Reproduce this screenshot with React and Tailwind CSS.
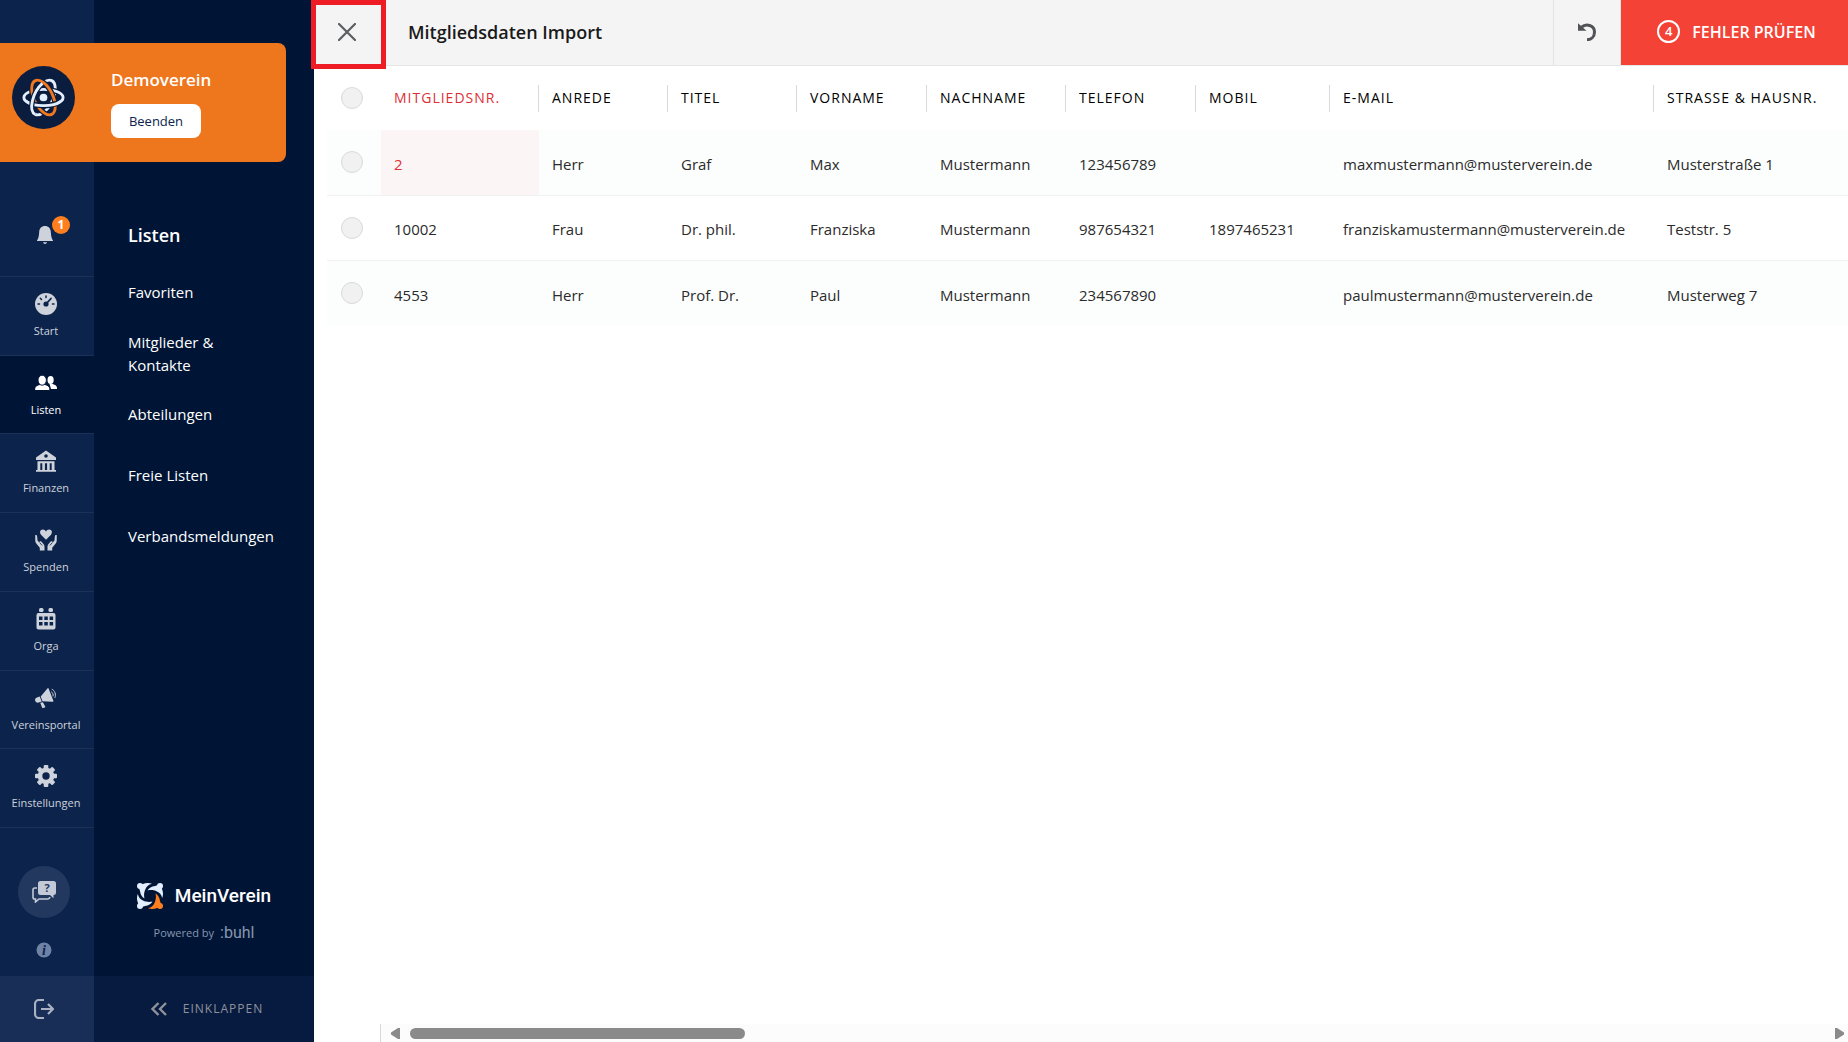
import { useState } from 'react';

const GaugeIcon = () => (
  <svg viewBox="0 0 22 22" className="h-[22px] w-[22px]" fill="currentColor">
    <circle cx="11" cy="11" r="11" />
    <g stroke="#0c244c" fill="none" strokeWidth="1.5" strokeLinecap="round">
      <path d="M3 11h1.5M17.5 11H19M11 3v1.5M5.3 5.3l1.2 1.2" />
      <path d="M11 11l5-5.5" strokeWidth="1.8" />
    </g>
    <circle cx="11" cy="11" r="2.6" fill="#0c244c" />
  </svg>
);

const PeopleIcon = () => (
  <svg viewBox="0 0 22 22" className="h-[22px] w-[22px]" fill="currentColor">
    <ellipse cx="15.6" cy="8" rx="3.1" ry="4" />
    <path d="M14.5 11.8h2.4c3 .8 5.1 2 5.1 4.2v1h-6z" />
    <g stroke="#001535" strokeWidth="1">
      <path d="M-.3 18.5v-1.7c0-2.5 2.8-3.8 5.5-4.4h4.2c2.7.6 5.4 1.9 5.4 4.4v1.7z" />
      <ellipse cx="7.2" cy="8.2" rx="4.2" ry="5" />
    </g>
  </svg>
);

const BankIcon = () => (
  <svg viewBox="0 0 22 22" className="h-[22px] w-[22px]" fill="currentColor">
    <path fillRule="evenodd" d="M11 .5L21 7.5V10H1V7.5zM11 4.200a1.8 1.8 0 1 0 0 3.600 1.8 1.8 0 0 0 0-3.600z" />
    <path d="M2.5 11.200h17v2h-17zM2.5 12h2.800v8.500H2.500zM7.300 12h2.600v8.500H7.300zM12.100 12h2.600v8.500h-2.600zM16.700 12h2.800v8.500h-2.800zM1 20h20v1.700H1z" />
  </svg>
);

const DonateIcon = () => (
  <svg viewBox="0 0 22 22" className="h-[22px] w-[22px]" fill="currentColor">
    <path d="M11 10.800L6 5.700C4.300 3.800 5.100.6 7.800.6c1.600 0 2.500.8 3.200 2 .7-1.200 1.600-2 3.200-2 2.700 0 3.500 3.200 1.800 5.100z" />
    <path d="M.2 6.200c.9-.5 1.800 0 1.900 1l.5 4.500 1.700 1.500c.2-1 1.400-1.300 2.200-.5l2.200 2.600c.6.8.8 1.600.8 2.500V21.500H4.800v-2.700L1.300 14.600C.6 13.800.3 13 .3 12z" />
    <path d="M21.800 6.200c-.9-.5-1.800 0-1.900 1l-.5 4.500-1.700 1.500c-.2-1-1.400-1.300-2.200-.5l-2.200 2.600c-.6.8-.8 1.600-.8 2.500V21.500h4.700v-2.700l3.500-4.200c.7-.8 1-1.600 1-2.600z" />
    <path d="M4.600 13.500l2.600 3M17.400 13.500l-2.600 3" stroke="#0c244c" strokeWidth=".8" />
  </svg>
);

const CalendarIcon = () => (
  <svg viewBox="0 0 22 22" className="h-[22px] w-[22px]" fill="currentColor">
    <rect x="4" y="0" width="4.5" height="4" rx="1.5" />
    <rect x="13.5" y="0" width="4.5" height="4" rx="1.5" />
    <path
      fillRule="evenodd"
      d="M3.500 5h15a2 2 0 0 1 2 2v12.500a2 2 0 0 1-2 2h-15a2 2 0 0 1-2-2V7a2 2 0 0 1 2-2zM4 8.500v3.500h3.500V8.500zM9.300 8.500v3.500h3.500V8.500zM14.600 8.500v3.500h3.500V8.500zM4 14v3.500h3.500V14zM9.300 14v3.500h3.500V14zM14.600 14v3.500h3.500V14z"
    />
  </svg>
);

const MegaphoneIcon = () => (
  <svg viewBox="0 0 22 22" className="h-[22px] w-[22px]" fill="currentColor">
    <path d="M12.200 1.800c.5-1 1.200-1 1.500-.1l4.600 11.800c.3.900-.2 1.400-1.100 1.200L7.500 14.300 5.700 9.500z" />
    <path d="M4.700 9.600l2 5-3 .9C1.900 16 .6 15.200.2 13.800c-.4-1.500.2-2.600 1.700-3.200zM5.200 15.700l2.700-.5 2.300 4.200c.2.500 0 .9-.5 1.100l-1.500.6c-.5.200-.9 0-1.100-.5z" />
    <path d="M16.300 4.800c1.300.6 2.300 2.800 1.700 4.600M16.800 2.200c2.900 1 4.600 5.500 3 8.700" fill="none" stroke="currentColor" strokeWidth="1" />
  </svg>
);

const GearIcon = () => (
  <svg viewBox="0 0 22 22" className="h-[22px] w-[22px]" fill="currentColor">
    {[0, 45, 90, 135].map((angle) => (
      <rect key={angle} x="8.7" y="0" width="4.6" height="22" rx="1" transform={`rotate(${angle} 11 11)`} />
    ))}
    <circle cx="11" cy="11" r="8.3" />
    <circle cx="11" cy="11" r="3.7" fill="#0c244c" />
  </svg>
);

const BellIcon = () => (
  <svg viewBox="0 0 16 18" className="h-[18px] w-4" fill="currentColor">
    <path d="M8 0c3.500 0 5.600 2.300 5.800 5.800.2 4 .6 6.300 2.200 8.700v.5H0v-.5c1.600-2.400 2-4.700 2.200-8.700C2.400 2.300 4.500 0 8 0z" />
    <path d="M6 16.300h4c-.3 1.100-1 1.700-2 1.700s-1.700-.6-2-1.700z" />
  </svg>
);

const ChatIcon = () => (
  <svg viewBox="0 0 24 22" className="h-[22px] w-6" fill="currentColor">
    <path d="M5 7H2.800Q1 7 1 8.800V16.200Q1 18 2.800 18H3.500V21L7 18H15.500Q17.500 18 17.800 16" fill="none" stroke="currentColor" strokeWidth="1.6" />
    <path d="M8.500 0h13A2.500 2.500 0 0 1 24 2.500v9a2.500 2.500 0 0 1-2.500 2.500v3.200L18 14H8.500A2.500 2.500 0 0 1 6 11.500v-9A2.500 2.500 0 0 1 8.500 0z" />
    <text x="15" y="11" fontSize="11" fontWeight="700" textAnchor="middle" fill="#22385f">?</text>
  </svg>
);

const InfoIcon = () => (
  <svg viewBox="0 0 16 16" className="h-4 w-4">
    <circle cx="8" cy="8" r="7.5" fill="#6f83a6" />
    <text x="8" y="13" fontSize="14" fontWeight="700" fontStyle="italic" fontFamily="Liberation Serif, serif" textAnchor="middle" fill="#0c244c">i</text>
  </svg>
);

const LogoutIcon = () => (
  <svg viewBox="0 0 20 20" className="h-5 w-5" fill="none" stroke="currentColor" strokeWidth="2.2">
    <path d="M10 1H5a4 4 0 0 0-4 4v10a4 4 0 0 0 4 4h5M7 10h12M14 5l5 5-5 5" />
  </svg>
);

const CloseIcon = () => (
  <svg viewBox="0 0 18 18" className="h-[18px] w-[18px]" fill="none" stroke="#5c5e62" strokeWidth="2.2" strokeLinecap="round">
    <path d="M1 1l16 16M17 1L1 17" />
  </svg>
);

const UndoIcon = () => (
  <svg viewBox="0 0 18 18" className="h-[18px] w-[18px]">
    <path d="M3.500 4.200C8 .2 16.500 2 16.500 9c0 5-3.500 7.700-7.500 7.700" fill="none" stroke="#515357" strokeWidth="3" />
    <path d="M0 .3L8.500 7.700H0z" fill="#515357" />
  </svg>
);

const CollapseIcon = () => (
  <svg viewBox="0 0 16 14" className="h-[14px] w-4" fill="none" stroke="currentColor" strokeWidth="2.4">
    <path d="M7.500 1l-6 6 6 6M15 1L9 7l6 6" />
  </svg>
);

const AtomLogo = () => (
  <svg viewBox="0 0 62 62" className="h-[63px] w-[63px]" fill="none">
    <circle cx="31" cy="31" r="31" fill="#0b1d3e" />
    <ellipse cx="31" cy="31" rx="18.5" ry="9.2" stroke="#e3efff" strokeWidth="2.8" transform="rotate(-64 31 31)" />
    <ellipse cx="31" cy="31" rx="19.3" ry="8" stroke="#0b1d3e" strokeWidth="5.2" />
    <ellipse cx="31" cy="31" rx="19.3" ry="8" stroke="#e3efff" strokeWidth="2.8" />
    <ellipse cx="31" cy="31" rx="18.5" ry="9.2" stroke="#0b1d3e" strokeWidth="5.2" transform="rotate(64 31 31)" />
    <ellipse cx="31" cy="31" rx="18.5" ry="9.2" stroke="#f0781e" strokeWidth="2.8" transform="rotate(64 31 31)" />
    <path d="M17.400 36.700A19.300 8 0 0 0 44.600 36.700" stroke="#0b1d3e" strokeWidth="5.2" />
    <path d="M14 34.800A19.300 8 0 0 0 48 34.800" stroke="#e3efff" strokeWidth="2.8" />
    <path d="M12.500 31A18.500 9.200 0 0 1 42 23.600" stroke="#0b1d3e" strokeWidth="5.2" transform="rotate(-64 31 31)" />
    <path d="M12.500 31A18.500 9.200 0 0 1 43 24" stroke="#e3efff" strokeWidth="2.8" transform="rotate(-64 31 31)" />
    <circle cx="31" cy="31" r="3.8" fill="#e3efff" />
  </svg>
);

const BrandLogo = () => (
  <svg viewBox="0 0 26 26" className="h-[26px] w-[26px]">
    {[0, 90, 180, 270].map((angle) => (
      <g key={angle} fill={angle === 0 ? '#ff7f1e' : '#e3efff'} transform={`rotate(${angle} 13 13)`}>
        <path d="M18.500 10.500C21 12 22.600 14.500 23 18L25 24 20 25C17 26.300 14 26.300 11 25.200 14.500 24.500 16.500 22.500 17.500 20 19 17 19.300 13.500 18.500 10.500z" />
        <circle cx="23" cy="23" r="3" />
      </g>
    ))}
  </svg>
);

const railItems = [
  { label: 'Start', icon: GaugeIcon },
  { label: 'Listen', icon: PeopleIcon, active: true },
  { label: 'Finanzen', icon: BankIcon },
  { label: 'Spenden', icon: DonateIcon },
  { label: 'Orga', icon: CalendarIcon },
  { label: 'Vereinsportal', icon: MegaphoneIcon },
  { label: 'Einstellungen', icon: GearIcon },
];

const menuItems = ['Favoriten', 'Mitglieder & Kontakte', 'Abteilungen', 'Freie Listen', 'Verbandsmeldungen'];

const columns = [
  { key: 'nr', label: 'Mitgliedsnr.', width: 'w-[158px]', error: true },
  { key: 'anrede', label: 'Anrede', width: 'w-[129px]' },
  { key: 'titel', label: 'Titel', width: 'w-[129px]' },
  { key: 'vorname', label: 'Vorname', width: 'w-[130px]' },
  { key: 'nachname', label: 'Nachname', width: 'w-[139px]' },
  { key: 'telefon', label: 'Telefon', width: 'w-[130px]' },
  { key: 'mobil', label: 'Mobil', width: 'w-[134px]' },
  { key: 'email', label: 'E-Mail', width: 'w-[324px]' },
  { key: 'strasse', label: 'Strasse & Hausnr.', width: 'min-w-[194px]' },
];

const members = [
  {
    nr: '2',
    anrede: 'Herr',
    titel: 'Graf',
    vorname: 'Max',
    nachname: 'Mustermann',
    telefon: '123456789',
    mobil: '',
    email: 'maxmustermann@musterverein.de',
    strasse: 'Musterstraße 1',
    errors: ['nr'],
  },
  {
    nr: '10002',
    anrede: 'Frau',
    titel: 'Dr. phil.',
    vorname: 'Franziska',
    nachname: 'Mustermann',
    telefon: '987654321',
    mobil: '1897465231',
    email: 'franziskamustermann@musterverein.de',
    strasse: 'Teststr. 5',
    errors: [],
  },
  {
    nr: '4553',
    anrede: 'Herr',
    titel: 'Prof. Dr.',
    vorname: 'Paul',
    nachname: 'Mustermann',
    telefon: '234567890',
    mobil: '',
    email: 'paulmustermann@musterverein.de',
    strasse: 'Musterweg 7',
    errors: [],
  },
];

const RoundCheckbox = ({ label, checked, onChange }) => (
  <input
    type="checkbox"
    aria-label={label}
    checked={checked}
    onChange={onChange}
    className="block h-[22px] w-[22px] appearance-none rounded-full border border-[#d9d9d9] bg-[#f1f1f1] checked:bg-[#f0781e]"
  />
);

const Rail = () => (
  <nav className="flex w-[94px] shrink-0 flex-col bg-[#0c244c] text-[#cdd2db]">
    <div className="flex h-[276px] flex-col items-center justify-end pr-1 pb-8">
      <button className="relative" aria-label="Benachrichtigungen">
        <BellIcon />
        <span className="absolute -top-[10px] left-[15px] flex h-[18px] w-[18px] items-center justify-center rounded-full bg-[#ff7f1e] text-[12px] font-bold text-white">
          1
        </span>
      </button>
    </div>
    <ul className="flex h-[552px] flex-col border-b border-[#1b3158]">
      {railItems.map(({ label, icon: Icon, active }) => (
        <li key={label} className="flex-1 border-t border-[#1b3158]">
          <a
            href="#"
            className={`flex h-full flex-col items-center gap-2 pt-4 pr-0.5 text-[11px] leading-4 ${
              active ? 'bg-[#001535] text-white' : ''
            }`}
          >
            <Icon />
            {label}
          </a>
        </li>
      ))}
    </ul>
    <div className="mt-auto flex flex-col items-center gap-6 pr-1.5 pb-[18px]">
      <button className="flex h-[52px] w-[52px] items-center justify-center rounded-full bg-[#22385f] text-[#c3c9d6]" aria-label="Hilfe">
        <ChatIcon />
      </button>
      <button aria-label="Info">
        <InfoIcon />
      </button>
    </div>
    <button className="flex h-[66px] items-center justify-center bg-[#192e56] pr-1.5 text-[#a9b1c2]" aria-label="Abmelden">
      <LogoutIcon />
    </button>
  </nav>
);

const SidePanel = () => (
  <div className="flex w-[220px] shrink-0 flex-col bg-[#001535]">
    <div className="pt-[222px] pr-6 pl-[34px] text-white">
      <h2 className="text-[18px] leading-[26px] font-semibold">Listen</h2>
      <ul className="pt-[14px]">
        {menuItems.map((item) => (
          <li key={item} className="flex h-[61px] items-center">
            <a href="#" className="w-[148px] text-[15px] leading-[23px]">
              {item}
            </a>
          </li>
        ))}
      </ul>
    </div>
    <div className="mt-auto flex flex-col items-center pb-[31px]">
      <div className="flex items-center gap-3 font-['Roboto',sans-serif] text-[19px] leading-[26px] font-medium text-white">
        <BrandLogo />
        MeinVerein
      </div>
      <div className="flex items-center gap-1.5 pt-3 text-[11px] leading-6 text-[#8795b0]">
        Powered by
        <span className="font-['Roboto',sans-serif] text-[16px]">:buhl</span>
      </div>
    </div>
    <button className="flex h-[66px] items-center justify-center gap-4 bg-[#071b41] pl-1.5 text-[12px] tracking-[1px] text-[#8f9299]">
      <CollapseIcon />
      EINKLAPPEN
    </button>
  </div>
);

const ClubCard = () => (
  <div className="absolute top-[43px] left-0 flex h-[119px] w-[286px] items-start gap-9 rounded-r-lg bg-[#ee761d] pt-[23px] pl-3">
    <AtomLogo />
    <div className="flex flex-col items-start gap-3 pt-0.5">
      <span className="text-[17px] leading-6 font-semibold text-white">Demoverein</span>
      <button className="h-[34px] w-[90px] rounded-lg bg-white pt-0.5 text-[13px] text-[#0c244c]">Beenden</button>
    </div>
  </div>
);

const ImportHeader = ({ errorCount }) => (
  <header className="flex h-[66px] items-center border-b border-[#e6e6e6] bg-[#f4f4f4]">
    <button className="relative flex h-full w-[66px] items-center justify-center pb-0.5" aria-label="Schließen">
      <CloseIcon />
      <span className="absolute top-0 -left-[3px] h-[69px] w-[75px] border-[5px] border-[#ee1c25]" />
    </button>
    <h1 className="ml-7 text-[18px] font-semibold text-[#1a1a1a]">Mitgliedsdaten Import</h1>
    <button className="ml-auto flex h-full w-[68px] items-center justify-center border-x border-[#e3e3e3] pb-0.5" aria-label="Rückgängig">
      <UndoIcon />
    </button>
    <button className="flex h-full w-[227px] items-center justify-center gap-3 bg-[#f44336] pb-0.5 pl-1 text-[16px] font-semibold text-white">
      <span className="flex h-[23px] w-[23px] items-center justify-center rounded-full border-2 border-white text-[13px] leading-none">
        {errorCount}
      </span>
      FEHLER PRÜFEN
    </button>
  </header>
);

const MemberTable = () => {
  const [selected, setSelected] = useState([]);
  const allSelected = selected.length === members.length;

  const toggle = (nr) =>
    setSelected(selected.includes(nr) ? selected.filter((s) => s !== nr) : [...selected, nr]);

  return (
    <div className="overflow-hidden pl-[13px]">
      <table className="w-full table-fixed text-left">
        <thead>
          <tr className="h-16">
            <th className="w-[54px] pl-[14px]">
              <RoundCheckbox
                label="Alle auswählen"
                checked={allSelected}
                onChange={() => setSelected(allSelected ? [] : members.map((m) => m.nr))}
              />
            </th>
            {columns.map((col, i) => (
              <th key={col.key} scope="col" className={`${col.width} p-0`}>
                <div
                  className={`flex h-[27px] items-center pb-0.5 pl-[13px] text-[14px] font-medium tracking-[1px] whitespace-nowrap uppercase ${
                    col.error ? 'text-[#dc2f36]' : 'text-black'
                  } ${i < columns.length - 1 ? 'border-r border-[#d9d9d9]' : ''}`}
                >
                  {col.label}
                </div>
              </th>
            ))}
          </tr>
        </thead>
        <tbody>
          {members.map((member) => (
            <tr key={member.nr} className="h-[65px] border-b border-[#f0f1f1] odd:bg-[#fcfefd] last:border-b-0">
              <td className="pl-[14px]">
                <RoundCheckbox
                  label={`Mitglied ${member.nr} auswählen`}
                  checked={selected.includes(member.nr)}
                  onChange={() => toggle(member.nr)}
                />
              </td>
              {columns.map((col) => (
                <td
                  key={col.key}
                  className={`pt-1 pl-[13px] text-[15px] whitespace-nowrap ${
                    member.errors.includes(col.key) ? 'bg-[#fcf5f5] text-[#e0303a]' : 'text-[#2b2b2b]'
                  }`}
                >
                  {member[col.key]}
                </td>
              ))}
            </tr>
          ))}
        </tbody>
      </table>
    </div>
  );
};

const HorizontalScrollbar = () => (
  <div className="mt-auto ml-[66px] flex h-[18px] items-center gap-[10px] border-l border-[#d9d9d9] bg-[#fcfcfc] pr-1 pl-[10px]">
    <svg viewBox="0 0 9 11" className="h-[11px] w-[9px]" fill="#8a8a8a">
      <path d="M9 0v11H7L0 6.500v-2L7 0z" />
    </svg>
    <div className="flex-1">
      <div className="h-[11px] w-[335px] rounded-full bg-[#8a8a8a]" />
    </div>
    <svg viewBox="0 0 9 11" className="h-[11px] w-[9px]" fill="#8a8a8a">
      <path d="M0 0v11h2l7-4.500v-2L2 0z" />
    </svg>
  </div>
);

export default function App() {
  return (
    <div className="flex min-h-screen bg-white font-['Open_Sans','Noto_Sans',sans-serif]">
      <aside className="relative flex shrink-0">
        <Rail />
        <SidePanel />
        <ClubCard />
      </aside>
      <main className="flex min-w-0 flex-1 flex-col">
        <ImportHeader errorCount={4} />
        <MemberTable />
        <HorizontalScrollbar />
      </main>
    </div>
  );
}
